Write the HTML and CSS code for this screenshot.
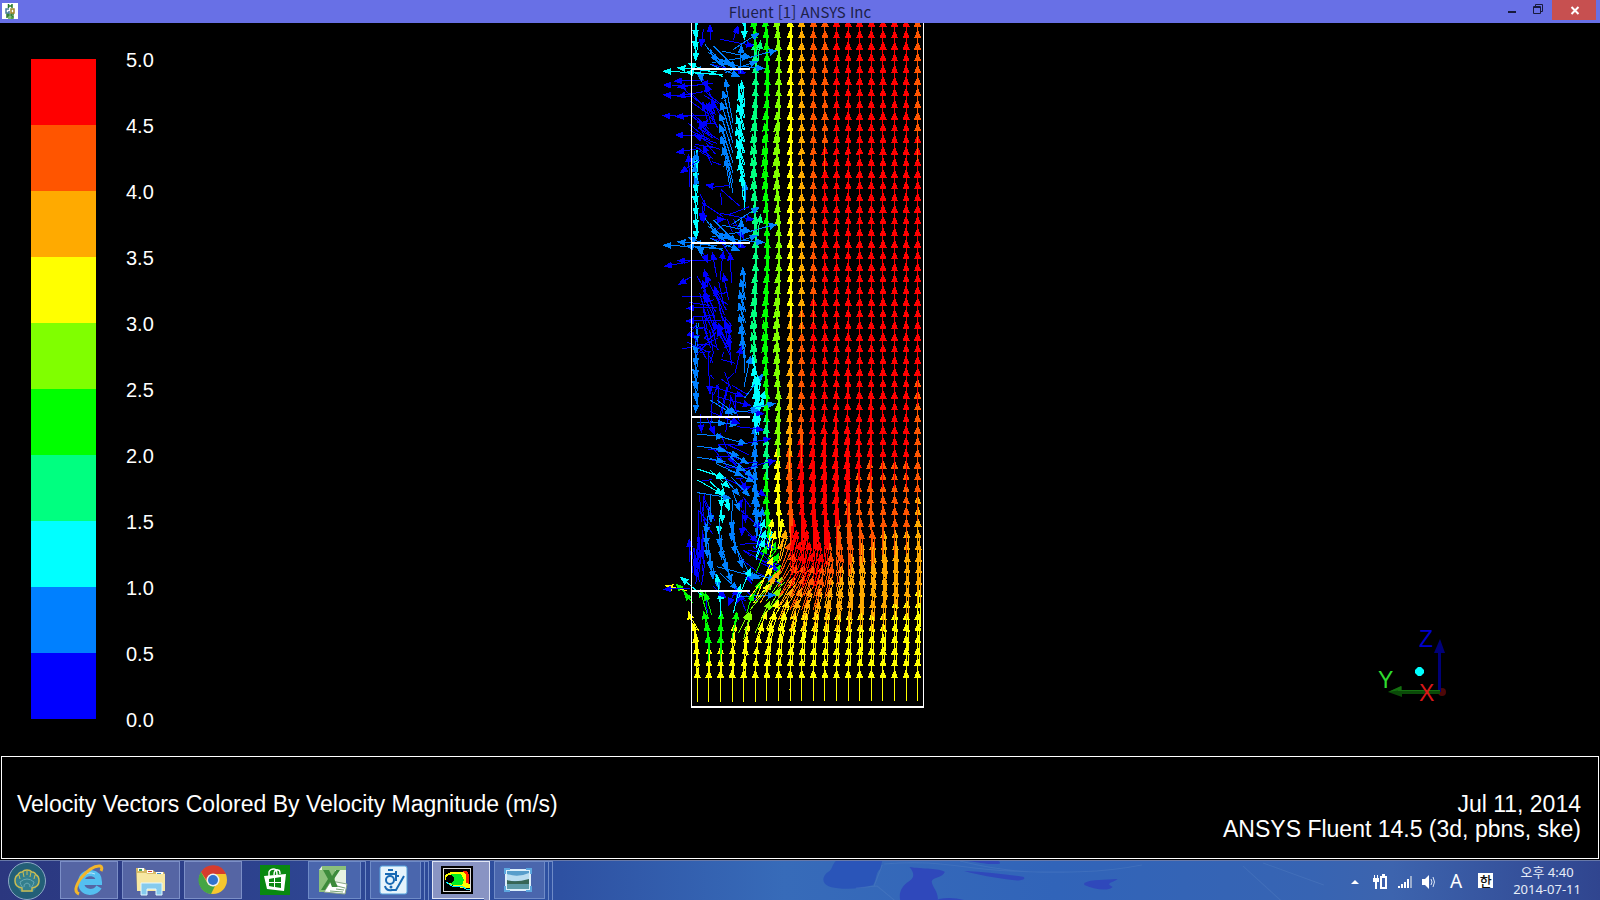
FILE: index.html
```html
<!DOCTYPE html>
<html lang="ko">
<head>
<meta charset="utf-8">
<title>Fluent [1] ANSYS Inc</title>
<link rel="stylesheet" href="styles.css">
</head>
<body>
<header class="titlebar">
  <svg class="app-icon" viewBox="0 0 16 16" aria-hidden="true">
    <path fill="#fff" d="M0 0h16v16H0z"/>
    <g fill="none" stroke-width="1.5">
      <path stroke="#287a2c" d="M6.500 1v4M10 1v4M6.500 3h3.500M5 15v-4h2v2H5M9 15h2v-2H9v-2h3"/>
      <path stroke="#4b7e9c" d="M7 6H4v4h3V8"/>
      <path stroke="#a1852a" d="M9 6h3v4H9z"/>
      <path stroke="#55a83c" d="M6 15h5"/>
    </g>
  </svg>
  <h1 class="title">Fluent [1] ANSYS Inc</h1>
  <div class="window-controls">
    <button class="win-btn" aria-label="Minimize"><svg width="30" height="20" viewBox="0 0 30 20"><path fill="#181b3c" d="M12 11h8v2h-8z"/></svg></button>
    <button class="win-btn" aria-label="Restore"><svg width="24" height="20" viewBox="0 0 24 20"><path fill="none" stroke="#181b3c" d="M7.500 6.500h7v7h-7zM7 7.500h8M9.500 6V4.500h7v7H15"/></svg></button>
    <button class="win-btn close" aria-label="Close"><svg width="44" height="18" viewBox="0 0 44 18"><path fill="none" stroke="#fff" stroke-width="2" d="M19.500 6l7 7M26.500 6l-7 7"/></svg></button>
  </div>
</header>

<main class="scene">
  <section class="legend" aria-label="Velocity magnitude">
    <div class="scale">
      <i class="c10"></i><i class="c9"></i><i class="c8"></i><i class="c7"></i><i class="c6"></i><i class="c5"></i><i class="c4"></i><i class="c3"></i><i class="c2"></i><i class="c1"></i>
    </div>
    <div class="ticks">
      <span>5.0</span><span>4.5</span><span>4.0</span><span>3.5</span><span>3.0</span><span>2.5</span><span>2.0</span><span>1.5</span><span>1.0</span><span>0.5</span><span>0.0</span>
    </div>
  </section>
  <svg class="plot" id="plot" viewBox="0 69 900 2094" role="img" aria-label="Velocity vectors"></svg>
  <div class="orientation">
    <svg class="triad" viewBox="0 0 100 100" role="img" aria-label="Axes">
      <circle cx="82" cy="82" r="4" fill="#4d0808"/>
      <path fill="#000078" d="M78 42h3v40h-3zM74 43l6-14 5 14z"/>
      <path fill="#0a4a08" d="M38 80h42v4H38zM42 76v11l-14-5z"/>
      <path fill="#146f10" d="M38 80h42v1H38zM41 76v4l-13 2z"/>
      <path fill="#0ff" d="M58 57h3l3 3v3l-3 3h-3l-3-3v-3z"/>
      <text x="59" y="37" fill="#00c">Z</text>
      <text x="18" y="78" fill="#2fdc2f">Y</text>
      <text x="59" y="91" fill="#d81818">X</text>
    </svg>
  </div>
</main>

<section class="caption">
  <p class="caption-title">Velocity Vectors Colored By Velocity Magnitude (m/s)</p>
  <p class="caption-info">Jul 11, 2014<br>ANSYS Fluent 14.5 (3d, pbns, ske)</p>
</section>

<footer class="taskbar">
  <svg class="wallpaper" viewBox="580 0 760 40" preserveAspectRatio="none" aria-hidden="true">
    <path fill="#2a55b9" d="M837 0C832 6 834 9 828 12 822 18 825 24 832 26 844 29 862 28 874 24 878 18 876 12 881 8L883 0z"/>
    <path fill="#2f48bb" d="M910 6C922 8 940 7 945 11 942 17 934 16 932 20 932 26 939 30 938 40H901C899 32 902 25 910 20 916 16 914 11 910 6zM964 10C985 11 1005 13 1023 16 1026 19 1018 20 1012 19 995 17 978 14 964 10zM968 0H998C1002 3 998 3 992 3 984 3 978 1 968 0zM1083 22C1090 18 1104 19 1116 18 1112 21 1106 22 1108 24L1111 26C1106 31 1092 28 1083 24zM939 38Q953 35 967 40H937z"/>
    <path fill="none" stroke="#5d88c8" opacity=".3" d="M885 3C940-2 960 8 1010 10S1100 12 1140 4M960 0C1000 10 1030 12 1070 11M857 27l21-2 18 15M883 4l-8 21M1240 5l38 35M1260 2l60 22"/>
  </svg>
  <nav class="tasks">
    <button class="start" aria-label="Start"><svg viewBox="0 0 40 40">
      <circle cx="20" cy="20" r="18.500" fill="#235f77" stroke="#8da9c6"/>
      <path fill="#347f8d" d="M11 27q-5-5-3-11 3-6 12-6t12 6q2 6-3 11l-3 4H14z"/>
      <path fill="none" stroke="#c9bb52" stroke-width="1.500" d="M15 30v-3q-7-1-7-7 0-5 3-6 1-3 4-3 2-2 5-2t5 2q3 0 4 3 3 1 3 6 0 6-7 7v3z"/>
      <path fill="none" stroke="#c9bb52" d="M12 14l1 4M16 11l1 5M20 9v5M24 11l-1 5M28 14l-1 4"/>
      <path fill="none" stroke="#69a9b4" d="M16 27q-3-4-3-6 7-6 14 0 0 2-3 6M17 26q-1-3 3-4 4 1 3 4"/>
    </svg></button>
    <button class="task" aria-label="Internet Explorer"><svg viewBox="0 0 32 32">
      <path fill="none" stroke="#54bff0" stroke-width="6" d="M26 23q-3 5-9 5-9-1-9-10 1-9 10-9 8 1 8 9H11"/>
      <path fill="none" stroke="#b9e9fb" stroke-width="1" d="M11 12q4-5 11-2"/>
      <path fill="none" stroke="#f3b62b" stroke-width="3" d="M6 30Q-1 27 8 14 19 1 27 2q3 1 1 5"/>
    </svg></button>
    <button class="task" aria-label="File Explorer"><svg viewBox="0 0 32 32">
      <path fill="#d9bd67" d="M1 4h8l2 2h7l2 2h9l1 3v15H2z"/>
      <path fill="#fff" d="M3 4h6v3H3zM12 6h6v3h-6zM21 8h7v3h-7z"/>
      <path fill="#f7e7a2" d="M2 9h9l2 1h17v17H2z"/>
      <path fill="#40a060" d="M4 5h3v2H4z"/><path fill="#d54a34" d="M13 7h4v1h-4z"/><path fill="#3e8bc8" d="M22 9h4v1h-4z"/>
      <path fill="#86cbed" stroke="#e3f7ff" d="M6 31V19h21v12h-6v-6h-9v6z"/>
    </svg></button>
    <button class="task" aria-label="Chrome"><svg viewBox="0 0 32 32">
      <circle cx="16" cy="16" r="14" fill="#f5c72f"/>
      <path fill="#d63c2e" d="M4 8A14 14 0 0 1 29 10H16q-5 0-6 7z"/>
      <path fill="#45a545" d="M4 8l7 12q3 3 7 2l-4 8A14 14 0 0 1 4 8z"/>
      <circle cx="16" cy="16" r="6.500" fill="#eef3f6"/><circle cx="16" cy="16" r="5" fill="#3273cd"/>
    </svg></button>
    <button class="task plain" aria-label="Store"><svg viewBox="0 0 32 32">
      <path fill="#098811" d="M1 1h30v30H1z"/>
      <path fill="#fff" d="M5 12l22-2-2 17-17-2z"/>
      <path fill="none" stroke="#fff" stroke-width="1.500" d="M10 12V8q1-3 5-3 3 0 3 6M15 11q0-6 4-5 2 0 2 4"/>
      <path fill="#098811" d="M10 15l5-1v4h-5zM16 14l6-1v5h-6zM10 19h5v4l-5-1zM16 19h6v5l-6-1z"/>
    </svg></button>
    <button class="task narrow stack1" aria-label="Excel"><svg viewBox="0 0 32 32">
      <path fill="#e7f2e1" d="M5 2h24v21H2V6z"/>
      <path fill="#8bc07b" d="M5 2h24v4H5zM2 6h16v22H2z"/>
      <path fill="#fff" stroke="#8ba886" d="M14 17l16 3-2 10-21-2z"/>
      <path fill="#3d8b3b" d="M6 6h6l3 6 4-6h4l-6 9 4 8h-6l-2-5-5 8H4l7-11z"/>
      <path fill="none" stroke="#78a377" d="M20 22l8 2M19 25l8 1M13 27l13 1"/>
    </svg></button>
    <button class="task narrow stack2" aria-label="Hangul"><svg viewBox="0 0 32 32">
      <rect x="2" y="2" width="27" height="28" rx="2" fill="#e6f4fc" stroke="#55a2dc"/>
      <path fill="none" stroke="#1769b4" stroke-width="2" d="M10 6h5M7 10h10M18 7v10M18 12h3"/>
      <circle cx="12" cy="16" r="4" fill="none" stroke="#1769b4" stroke-width="2"/>
      <path fill="none" stroke="#1769b4" stroke-width="2" d="M7 22q1 5 7 4h4l8-14"/>
      <circle cx="13" cy="23" r="1.500" fill="#1769b4"/>
    </svg></button>
    <button class="task narrow active stack1" aria-label="Fluent"><svg viewBox="0 0 32 32" shape-rendering="crispEdges">
      <path fill="#000" d="M0 2h32v28H0z"/><path fill="#000" stroke="#ddd" d="M2.500 4.500h27v23h-27z"/>
      <path fill="#ff0" d="M4 11l6-3h14l2 2v9l3 1v4h-8L10 21l-6-5z"/>
      <path fill="#0e2" d="M5 13l6-3h9l3 6-2 5H11z"/>
      <path fill="#f20" d="M22 7h4l2 4v9l-3-1v-8z"/>
      <path fill="none" stroke="#0ef" stroke-width="1" d="M5 18l6 4h10l4 3h4"/><circle cx="9" cy="15" r="4" fill="#000"/>
    </svg></button>
    <button class="task narrow stack2" aria-label="Photos"><svg viewBox="0 0 32 32">
      <path fill="#dceffb" d="M3 5h26v22H3z"/><path fill="#579dcb" d="M5 7h22v18H5z"/><path fill="#b9dcf0" d="M5 10q11 4 22-1v8H5z"/>
      <path fill="#376556" d="M5 16q8 3 22-1v5H5z"/><path fill="#5e9aa8" d="M5 20h22v5H5z"/>
      <path fill="none" stroke="#5da7df" stroke-width="2" d="M3 10V5h5M24 5h5v5M3 22v5h5M24 27h5v-5"/>
    </svg></button>
  </nav>
  <div class="tray">
    <svg width="8" height="40" viewBox="0 0 8 40"><path fill="#fff" d="M0 23l4-4 4 4z"/></svg>
    <svg width="16" height="40" viewBox="0 0 16 40"><path fill="#fff" d="M1 14h1v3h2v-3h1v3h1v4H4v7H2v-7H0v-4h1zM9 13h3v2h2v13H7V15h2z"/><path fill="#3e60ab" d="M9 17h3v9H9z"/></svg>
    <svg width="16" height="40" viewBox="0 0 16 40"><path fill="#fff" d="M1 25h2v2H1zM4 23h2v4H4zM7 21h2v6H7zM10 18h2v9h-2z"/><path fill="#9badce" d="M13 15h2v12h-2z"/></svg>
    <svg width="16" height="40" viewBox="0 0 16 40"><path fill="#fff" d="M1 18h3l4-4v14l-4-4H1z"/><path fill="none" stroke="#dce6f7" d="M10 18q2 3 0 6M12 16q3 5 0 10"/></svg>
    <span class="ime">A</span>
    <span class="ime-lang">한</span>
    <time class="clock" datetime="2014-07-11T16:40">오후 4:40<br>2014-07-11</time>
  </div>
</footer>
<script src="field.js"></script>
</body>
</html>
```
FILE: styles.css
```css
* { box-sizing: border-box; }
body {
  margin: 0;
  min-height: 100vh;
  display: flex;
  flex-direction: column;
  background: #000;
  color: #fff;
  font-family: "Liberation Sans", Arial, sans-serif;
}
button { border: 0; padding: 0; margin: 0; background: none; }
svg { display: block; }
p { margin: 0; }

.titlebar {
  display: grid;
  grid-template-columns: 1fr auto 1fr;
  align-items: start;
  height: 23px;
  background: #6870e6;
}
.app-icon { width: 16px; height: 16px; margin: 3px 0 0 2px; }
.title {
  margin: 0;
  color: #1d2148;
  font: 400 15px/23px "Noto Sans CJK KR", "Noto Sans", sans-serif;
}
.window-controls { display: flex; justify-content: flex-end; padding-right: 4px; }
.win-btn:nth-child(2) { margin-right: 2px; }
.close { background: #c75050; }

.scene {
  flex: 1;
  display: grid;
  grid-template-columns: 1fr 300px 1fr;
  align-items: start;
}
.legend { display: flex; gap: 30px; padding-left: 31px; }
.scale { width: 65px; margin-top: 36px; }
.scale i { display: block; height: 66px; }
.ticks { margin-top: 4px; font-size: 20px; }
.ticks span { display: block; line-height: 66px; }
.c10 { background: #f00; }
.c9 { background: #f50; }
.c8 { background: #fa0; }
.c7 { background: #ff0; }
.c6 { background: #80ff00; }
.c5 { background: #0f0; }
.c4 { background: #00ff80; }
.c3 { background: #0ff; }
.c2 { background: #0080ff; }
.c1 { background: #00f; }
.plot { width: 300px; height: 698px; shape-rendering: crispEdges; }
.orientation {
  align-self: end;
  display: flex;
  justify-content: flex-end;
  padding: 0 140px 46px 0;
}
.triad { width: 100px; height: 100px; font-size: 23px; overflow: visible; }

.caption {
  display: flex;
  justify-content: space-between;
  margin: 0 1px 1px;
  padding: 35px 17px 16px 15px;
  border: 1px solid #fff;
  font-size: 23px;
  line-height: 25px;
}
.caption-info { text-align: right; }

.taskbar {
  position: relative;
  display: flex;
  justify-content: space-between;
  height: 40px;
  border-top: 1px solid #6778a8;
  background: linear-gradient(90deg, #2b377f 0, #2d438f 17%, #2e51a2 35%, #376bb9 49%, #3164b9 66%, #3764b3 82%, #3d64ae 87%, #30458f 100%);
}
.wallpaper { position: absolute; left: 36%; top: 0; width: 48%; height: 40px; }
.tasks { position: relative; display: flex; align-items: flex-start; }
.start { width: 40px; height: 40px; margin: 0 13px 0 7px; }
.task {
  position: relative;
  width: 58px;
  height: 38px;
  margin-right: 4px;
  display: flex;
  align-items: center;
  justify-content: center;
  border: 1px solid #7c8fc7;
  background: #5565a4;
}
.task svg { width: 32px; height: 32px; }
.plain { border-color: transparent; background: none; }
.narrow { width: 53px; margin-right: 9px; padding-right: 4px; border-color: #6f8bc7; background: #4a66ad; }
.stack2 { width: 51px; margin-right: 11px; }
.stack1::after, .stack2::before, .stack2::after {
  content: "";
  position: absolute;
  left: 100%;
  top: -1px;
  width: 5px;
  height: 38px;
  border: 1px solid #6f8bc7;
  border-left: 0;
}
.stack2::before { width: 4px; }
.stack2::after { width: 8px; }
.active, .active::after { border-color: #dfe5f5; background: #8994c3; }

.tray { position: relative; display: flex; align-items: center; gap: 8px; padding-right: 19px; }
.tray svg:first-child { margin-right: 6px; }
.ime { width: 16px; margin-left: 3px; font: 19px "Noto Sans", sans-serif; text-align: center; }
.ime-lang {
  width: 15px;
  margin: 0 12px 0 6px;
  background: #fff;
  color: #111;
  font: 500 13px/15px "Noto Sans CJK KR", sans-serif;
  text-align: center;
}
.clock { font: 13px/17px "Noto Sans", "Noto Sans CJK KR", sans-serif; text-align: center; color: #e7edf8; }
```
FILE: field.js
```js
// Coordinates are in thirds of a screen pixel.
const R = '#f00', O = '#f50', A = '#fa0', Y = '#ff0', H = '#80ff00', G = '#0f0',
      S = '#00ff80', C = '#0ff', D = '#0080ff', B = '#00f';
const out = [];

function line(x1, y1, x2, y2, color, width) {
  const w = width ? ` stroke-width="${width}"` : '';
  out.push(`<path stroke="${color}"${w} d="M${x1 | 0} ${y1 | 0}L${x2 | 0} ${y2 | 0}"/>`);
}
function arrow(x1, y1, x2, y2, color, size = 26) {
  const a = Math.atan2(y2 - y1, x2 - x1);
  const c = Math.cos(a), s = Math.sin(a), w = size * 0.4;
  const bx = x2 - c * size, by = y2 - s * size;
  const n = v => Math.round(v);
  out.push(`<path fill="${color}" stroke="none" d="M${n(x2)} ${n(y2)}L${n(bx - s * w)} ${n(by + c * w)}L${n(bx + s * w)} ${n(by - c * w)}z"/>`);
  line(x1, y1, bx, by, color);
}
const list = (color, dy, items) => items.forEach(([a, b, c, d]) => arrow(a, b + dy, c, d + dy, color));

let seed = 7;
function rnd() { seed = (seed * 16807) % 2147483647; return seed / 2147483647; }
function scatter(n, x0, x1, y0, y1, dx, dy, spread, color, heads) {
  for (let i = 0; i < n; i++) {
    const x = x0 + rnd() * (x1 - x0), y = y0 + rnd() * (y1 - y0);
    const ex = x + dx + (rnd() - 0.5) * spread, ey = y + dy + (rnd() - 0.5) * spread;
    if (rnd() < heads) arrow(x, y, ex, ey, color);
    else line(x, y, ex, ey, color);
  }
}
function stack(x, y0, y1, dx, dy, color, bow = 0) {
  for (let y = y0; y <= y1; y += 35) {
    const t = (y - y0) / (y1 - y0 || 1);
    const tx = x + dx - bow * Math.sin(Math.PI * t);
    arrow(x, y - dy, tx, y, color);
    line(x + 5, y - dy, tx + 3, y - 10 * Math.sign(dy), color);
  }
}

// Colour bands of each column, from the top down: [lower limit, colour]
const bands = {
  5: [[100, G], [1050, S], [1270, C], [1560, D]],
  6: [[1230, G], [1400, S], [1560, G], [1610, C], [1700, G], [1790, H], [2200, Y]],
  7: [[1330, H], [1540, Y], [1580, Y], [1610, A], [1710, O], [1790, A], [2200, Y]],
  8: [[920, Y], [1330, A], [1530, O], [1690, R], [1740, O], [1800, A], [2200, Y]],
  9: [[920, A], [1280, O], [1680, R], [1750, O], [1820, A], [2200, Y]],
  10: [[880, O], [1670, R], [1740, O], [1820, A], [2200, Y]],
  11: [[420, O], [1620, R], [1720, O], [1820, A], [2200, Y]],
  12: [[1530, R], [1670, O], [1820, A], [2200, Y]],
  13: [[1450, R], [1640, O], [1820, A], [2200, Y]],
  14: [[1390, R], [1620, O], [1815, A], [2200, Y]],
  15: [[1370, R], [1600, O], [1810, A], [2200, Y]],
  16: [[1350, R], [1585, O], [1800, A], [2200, Y]],
  17: [[1345, R], [1580, O], [1790, A], [2200, Y]],
  18: [[1350, R], [1570, O], [1780, A], [2200, Y]],
  19: [[390, O], [1130, R], [1480, O], [1740, A], [2200, Y]]
};
const speed = { [R]: 120, [O]: 116, [A]: 108, [Y]: 98, [H]: 84, [G]: 70, [S]: 60, [C]: 50, [D]: 45 };

for (let row = 0; row < 64; row++) {
  const tip = 2007 - row * 34.9;
  for (let i = 5; i < 20; i++) {
    const x = 142 + 34.8 * i;
    const color = bands[i].find(b => tip < b[0]);
    if (!color) continue;
    const len = speed[color[1]];
    const k = Math.exp(-Math.pow((tip - 1700) / (tip > 1700 ? 140 : 120), 2));
    let dx = 0.76 * k * Math.exp(-(i - 5) / 4.5) * len;
    if (tip < 1520 && i < 16) dx -= 5 * Math.exp(-Math.pow((tip - 1400) / 200, 2));
    if (i < 8 && tip < 1150) dx += -5 + 6 * Math.cos((tip - 208) / 522 * 2 * Math.PI);
    const reach = len * (1 - 0.12 * k);
    arrow(x, tip + reach, x + dx, tip, color[1], 27);
    const thick = i < 9 || (tip > 1250 && i < 14);
    const core = tip > 1370 && i > 7 && i < 14;
    if (thick && tip < 1600) line(x + 3, tip + 60, x + dx + 2, tip + 8, color[1], core ? 10 : 6);
    if (tip > 1560 && i > 5 && k > 0.08) {
      line(x + 7, tip + reach - 8, x + dx + 5, tip + 20, color[1]);
    }
  }
}
// Column 5 below the baffles, and the inlet columns on the left
[[2007, 0], [1972, 2], [1937, 5], [1902, 12], [1867, 22], [1832, 34], [1800, 45]].forEach(([y, d]) => {
  arrow(316, y + 98, 316 + d, y, y > 1810 ? Y : H);
});
const lean = [[-2, -4, -6, -14, -28], [0, 0, -3, -8, -16], [0, 0, 0, 0, 2], [0, 2, 5, 9, 15], [2, 6, 10, 15, 22]];
for (let i = 0; i < 5; i++) {
  const x = 142 + 34.8 * i;
  arrow(x, 2105, x, 2007, Y);
  [1972, 1937, 1902, 1867, 1832].forEach((y, k) => {
    const green = (i === 1 || i === 2) ? k > 1 : i > 2 ? k > 3 : false;
    const c = green ? (i === 4 ? H : G) : Y;
    arrow(x, y + 85, x + lean[i][k], y, c);
    line(x + 4, y + 60, x + lean[i][k] + 3, y + 12, c);
  });
}

// Lowest compartment
scatter(18, 150, 300, 1270, 1460, 50, 15, 70, B, 0.1);
scatter(22, 128, 160, 1660, 1755, 0, -70, 20, B, 0);
scatter(16, 270, 330, 1470, 1740, 40, 20, 80, B, 0.35);
scatter(8, 140, 165, 1480, 1560, 15, 60, 50, B, 0);
scatter(9, 160, 320, 1770, 1800, 10, 30, 60, B, 0.3);
list(B, 1410, [[285, 90, 286, 160], [280, 120, 275, 200], [120, 275, 118, 205], [280, 170, 325, 220], [300, 200, 375, 235], [280, 240, 385, 300], [320, 60, 350, 80]]);
list(D, 720, [[142, 548, 230, 550], [180, 545, 265, 555], [142, 582, 225, 592], [190, 585, 292, 612], [142, 618, 230, 632], [180, 622, 270, 648], [210, 625, 298, 672], [142, 652, 225, 665], [180, 655, 285, 692], [240, 650, 310, 712]]);
list(C, 1410, [[142, -3, 230, 25], [150, 0, 225, 25], [142, 30, 222, 75], [180, 0, 240, 55], [180, 35, 230, 82], [215, 40, 238, 125], [215, 60, 214, 115], [222, 70, 236, 105], [215, 95, 217, 160], [212, 120, 206, 195]]);
list(D, 1410, [[200, -18, 280, 18], [235, 0, 315, 38], [242, 20, 300, 80], [220, 20, 270, 78], [247, 60, 270, 125], [142, 68, 245, 85], [180, 70, 183, 160], [247, 90, 245, 182], [178, 110, 167, 195], [172, 150, 168, 230], [170, 180, 172, 265], [174, 220, 182, 300], [180, 250, 190, 330], [210, 155, 208, 232], [209, 190, 216, 270], [212, 225, 230, 305], [220, 260, 246, 340], [246, 130, 245, 215], [246, 165, 256, 255], [250, 200, 278, 295], [260, 235, 310, 335], [210, 310, 265, 360], [185, 280, 210, 360], [200, 290, 335, 325], [280, 305, 380, 330], [270, 380, 380, 375]]);
line(168, 1570, 166, 1640, D); line(173, 1620, 186, 1720, D);
line(213, 1600, 214, 1680, D); line(216, 1640, 240, 1730, D); line(249, 1560, 254, 1640, D);
list(D, 1410, [[320, 130, 320, 55], [320, 150, 323, 85], [322, 180, 325, 115], [330, 180, 338, 110]]);
list(C, 1410, [[318, 235, 345, 145], [318, 260, 347, 180], [318, 270, 344, 205]]);
list(G, 1410, [[318, 310, 352, 225], [175, 445, 150, 355], [185, 435, 165, 365], [130, 400, 100, 366], [125, 385, 75, 340], [290, 430, 310, 365], [300, 400, 335, 330]]);
list(H, 1410, [[265, 490, 298, 425], [300, 420, 370, 335]]);
list(Y, 1410, [[318, 385, 370, 260], [300, 380, 370, 290], [110, 362, 43, 347], [310, 400, 362, 340], [355, 230, 368, 145], [360, 260, 376, 180]]);
list(A, 1410, [[330, 400, 390, 300], [340, 385, 375, 315]]);
list(C, 1410, [[155, 375, 90, 320], [213, 420, 200, 310], [210, 440, 213, 360], [250, 430, 272, 342], [265, 385, 303, 292]]);
list(B, 1410, [[120, 355, 38, 358], [190, 350, 230, 385], [260, 350, 235, 410]]);

// Middle compartment
stack(140, 1030, 1250, -2, 60, D, 4);
stack(282, 800, 1030, -4, -65, D, 12);
scatter(30, 170, 247, 860, 1080, -25, -70, 40, B, 0.3);
scatter(18, 150, 250, 860, 1060, -30, 0, 80, B, 0);
scatter(10, 125, 200, 940, 1060, -10, 20, 50, B, 0);
scatter(16, 170, 270, 1060, 1200, 10, 60, 100, B, 0.1);
list(B, 720, [[180, 62, 80, 62], [120, 65, 40, 80], [125, 110, 83, 135], [200, 203, 107, 205], [215, 240, 105, 243], [150, 285, 107, 285], [210, 120, 220, 30], [245, 130, 240, 35], [200, 110, 187, 35], [175, 340, 180, 465], [245, 375, 235, 285], [255, 400, 275, 315]]);
list(D, 720, [[282, 440, 303, 345], [180, 480, 250, 525], [283, 475, 340, 400]]);
line(283, 1040, 284, 1120, D);
list(C, 720, [[318, 500, 322, 405], [318, 530, 346, 450], [320, 545, 340, 475]]);
stack(320, 1130, 1240, 6, -70, C);

// Upper compartment
stack(138, 510, 720, 0, 60, C, 2);
stack(138, 80, 200, 0, 60, C, 3);
stack(280, 240, 520, -6, -80, C, 16);
scatter(8, 272, 282, 330, 560, -10, -80, 10, C, 0);
for (let k = 0; k < 8; k++) {
  const bow = Math.sin(k / 7 * Math.PI);
  arrow(240, 325 + k * 34, 226 - 18 * bow, 235 + k * 34, D);
  line(249, 370 + k * 30, 230 - 12 * bow, 270 + k * 30, D);
}
arrow(285, 605, 286, 545, D);
line(284, 630, 284, 540, C);
scatter(26, 160, 215, 300, 520, -40, -28, 40, B, 0);
scatter(7, 160, 200, 330, 500, -20, -50, 30, B, 0.5);
scatter(14, 145, 260, 540, 700, 15, 25, 110, B, 0.1);
scatter(10, 125, 142, 480, 580, 0, -25, 15, D, 0.3);
list(B, 0, [[135, 256, 37, 255], [160, 240, 70, 244], [190, 250, 80, 262], [125, 290, 37, 284], [160, 275, 80, 290], [115, 350, 35, 347], [175, 345, 75, 350], [145, 407, 73, 405], [150, 445, 77, 458], [150, 480, 88, 520], [210, 345, 165, 250], [195, 370, 145, 370], [200, 430, 130, 405], [165, 600, 160, 670], [180, 120, 180, 70], [250, 120, 265, 75], [120, 560, 115, 460]]);
stack(283, 85, 120, 0, 60, C);

// Jets that cross each baffle
function baffleJets(y, side, low) {
  list(low, y, [[165, -75, 205, -20], [180, -60, 225, -5], [190, -70, 260, 0], [175, -50, 245, -10]]);
  list(B, y, [[210, -90, 315, -70], [160, -120, 153, -65], [185, -15, 290, 12], [150, 10, 175, 60]]);
  list(D, y, [[240, -12, 345, -2], [185, -20, 300, -38], [280, -30, 383, -58], [180, -15, 270, 22], [272, 10, 274, -75], [215, -55, 305, -35], [225, 10, 325, -25], [250, -60, 330, -110], [150, -10, 155, 40]]);
  list(side, y, [[220, 17, 37, 5], [200, 7, 80, -5], [220, 22, 112, -18], [200, 15, 105, 8]]);
  list(S, y, [[324, -25, 332, -88]]);
}
baffleJets(208, C, D);
baffleJets(730, D, D);
list(B, 1250, [[185, -90, 285, -60], [200, -60, 305, -32], [240, -20, 345, -8], [180, -15, 270, 22], [150, -10, 155, 50], [170, 0, 195, 55], [260, 30, 345, 40], [290, 80, 365, 65], [290, 155, 380, 130]]);
list(D, 1250, [[200, -50, 260, -8], [240, -12, 330, -20], [300, -25, 378, -40]]);

document.getElementById('plot').innerHTML =
  `<g fill="none" stroke-width="3">${out.join('')}</g>
   <path fill="none" stroke="#fff" stroke-width="3" d="M124.500 69V2120M820.500 69V2120"/>
   <path fill="none" stroke="#fff" stroke-width="6" d="M123 2121H822"/>
   <path fill="none" stroke="#fff" stroke-width="6" d="M126 208H300M126 730H300M126 1251H300M126 1773H300"/>`;
```
